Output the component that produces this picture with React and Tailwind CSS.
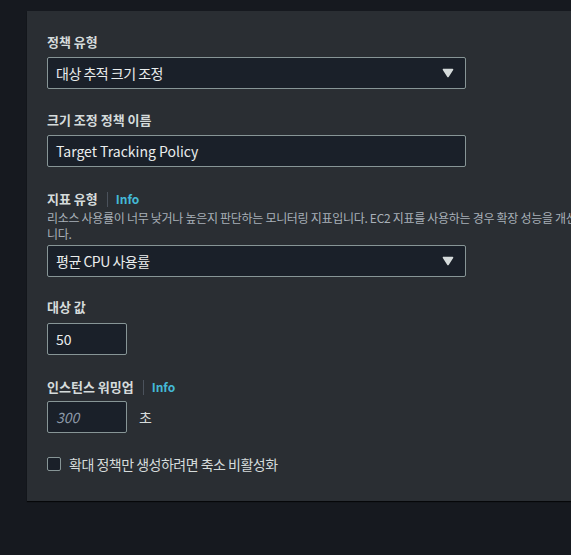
import React from "react";

const FONT = { fontFamily: '"Noto Sans CJK KR", "Noto Sans", sans-serif' };

function Label({ children, info }) {
  return (
    <div className="flex h-[22px] items-center">
      <span className="text-[13px] font-semibold leading-[22px] text-[#d5dbdb]">{children}</span>
      {info && (
        <>
          <span className="ml-[9px] h-[15px] w-px bg-[#4b525c]" />
          <span className="ml-[8px] text-[12px] font-bold leading-[22px] text-[#44b9d6]">Info</span>
        </>
      )}
    </div>
  );
}

function Arrow() {
  return (
    <svg width="12" height="10" viewBox="0 0 12 10" className="block">
      <polygon points="1.5,1.5 10.5,1.5 6,8.5" fill="#d5dbdb" stroke="#d5dbdb" strokeWidth="1.6" strokeLinejoin="round" />
    </svg>
  );
}

function Select({ children }) {
  return (
    <div className="mt-[4px] flex h-[32px] w-[419px] items-center justify-between rounded-[2px] border border-[#879596] bg-[#1a2029] pl-[8px] pr-[11px]">
      <span className="text-[14px] leading-[22px] tracking-[-0.5px] text-[#eaeded]">{children}</span>
      <Arrow />
    </div>
  );
}

export default function App() {
  return (
    <div className="h-[555px] w-full overflow-hidden bg-[#16191f]" style={FONT}>
      <div className="pl-[27px] pt-[11px]">
        <div className="w-[900px] bg-[#2a2e33] pb-[26px] pl-[20px] pt-[20px] shadow-[0_1px_1px_rgba(0,0,0,0.7)]">
          <Label>정책 유형</Label>
          <Select>대상 추적 크기 조정</Select>

          <div className="mt-[20px]">
            <Label>크기 조정 정책 이름</Label>
            <div className="mt-[4px] flex h-[32px] w-[419px] items-center rounded-[2px] border border-[#879596] bg-[#1a2029] pl-[8px]">
              <span className="text-[14px] leading-[22px] text-[#eaeded]">Target Tracking Policy</span>
            </div>
          </div>

          <div className="mt-[21px]">
            <Label info>지표 유형</Label>
            <div className="text-[12px] leading-[16px] tracking-[-0.3px] text-[#a8b0b8]">
              <div className="whitespace-nowrap">
                리소스 사용률이 너무 낮거나 높은지 판단하는 모니터링 지표입니다. EC2 지표를 사용하는 경우 확장 성능을 개선하려면 세부 모니터링을 활성화하는 것이 좋습
              </div>
              <div>니다.</div>
            </div>
            <div className="-mt-[1px]">
              <Select>평균 CPU 사용률</Select>
            </div>
          </div>

          <div className="mt-[19px]">
            <Label>대상 값</Label>
            <div className="mt-[5px] flex h-[32px] w-[80px] items-center rounded-[2px] border border-[#879596] bg-[#1a2029] pl-[8px]">
              <span className="text-[14px] leading-[22px] text-[#eaeded]">50</span>
            </div>
          </div>

          <div className="mt-[21px]">
            <Label info>인스턴스 워밍업</Label>
            <div className="mt-[3px] flex items-center">
              <div className="flex h-[32px] w-[80px] items-center rounded-[2px] border border-[#879596] bg-[#1a2029] pl-[8px]">
                <span className="text-[14px] italic leading-[22px] text-[#8d99a8]">300</span>
              </div>
              <span className="ml-[12px] text-[14px] leading-[22px] text-[#d5dbdb]">초</span>
            </div>
          </div>

          <div className="mt-[20px] flex h-[22px] items-center">
            <span className="h-[14px] w-[14px] rounded-[2px] border border-[#879596] bg-[#1a2029]" />
            <span className="ml-[8px] text-[14px] leading-[22px] tracking-[-0.5px] text-[#d5dbdb]">
              확대 정책만 생성하려면 축소 비활성화
            </span>
          </div>
        </div>
      </div>
    </div>
  );
}
